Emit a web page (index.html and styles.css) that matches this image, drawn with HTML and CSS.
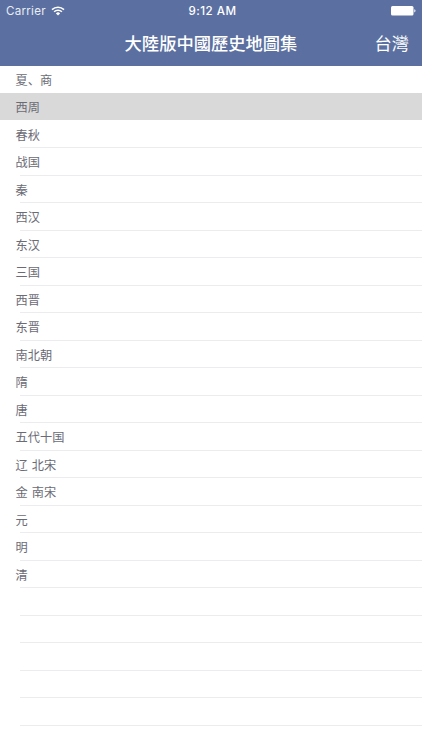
FILE: index.html
```
<!DOCTYPE html>
<html lang="zh-Hans">
<head>
  <meta charset="utf-8">
  <title>大陸版中國歷史地圖集</title>
  <link rel="stylesheet" href="styles.css">
</head>
<body>

<header>
  <div class="status">
    <div class="carrier">
      <span>Carrier</span>
      <svg width="14" height="10" viewBox="0 0 14 10">
        <path d="M1 3.6a8.6 8.6 0 0 1 12 0M3.1 5.8a5.6 5.6 0 0 1 7.8 0" fill="none" stroke="#fff" stroke-width="1.5"/>
        <path d="M4.9 7.4a3 3 0 0 1 4.2 0L7 9.5z" fill="#fff"/>
      </svg>
    </div>
    <div class="time">9:12 AM</div>
    <div class="battery">
      <svg width="25" height="10" viewBox="0 0 25 10">
        <rect width="22.5" height="9.5" rx="1.5" fill="#fff"/>
        <path d="M23.3 3.2q1.2.4 1.2 1.6t-1.2 1.6z" fill="#fff"/>
      </svg>
    </div>
  </div>
  <nav lang="zh-Hant">
    <h1>大陸版中國歷史地圖集</h1>
    <a class="region">台灣</a>
  </nav>
</header>

<ul class="periods">
  <li class="plain">夏、商</li>
  <li class="selected">西周</li>
  <li>春秋</li>
  <li>战国</li>
  <li>秦</li>
  <li>西汉</li>
  <li>东汉</li>
  <li>三国</li>
  <li>西晋</li>
  <li>东晋</li>
  <li>南北朝</li>
  <li>隋</li>
  <li>唐</li>
  <li>五代十国</li>
  <li>辽 北宋</li>
  <li>金 南宋</li>
  <li>元</li>
  <li>明</li>
  <li>清</li>
  <li></li>
  <li></li>
  <li></li>
  <li></li>
  <li></li>
</ul>

</body>
</html>
```
FILE: styles.css
```
body {
  margin: 0;
  height: 750px;
  overflow: hidden;
  background-color: #fff;
  font-family: Inter, "Noto Sans CJK SC", sans-serif;
}
header {
  height: 65.5px;
  color: #fff;
  background-color: #5b70a1;
}
.status {
  display: grid;
  grid-template-columns: 1fr auto 1fr;
  align-items: center;
  height: 21px;
  padding: 0 6px;
  font-size: 11.6px;
}
.carrier {
  display: flex;
  align-items: center;
  gap: 5px;
  color: #e9edf5;
  letter-spacing: 0.25px;
}
.time {
  padding-left: 3px;
  font-weight: 500;
  letter-spacing: 0.5px;
}
.battery {
  display: flex;
  justify-content: flex-end;
}
nav {
  display: grid;
  grid-template-columns: 1fr auto 1fr;
  align-items: center;
  height: 42px;
  padding: 0 13px;
  font-family: "Noto Sans CJK TC", sans-serif;
}
h1 {
  grid-column: 2;
  margin: 0;
  font-size: 17.3px;
  font-weight: 500;
}
.region {
  justify-self: end;
  font-size: 17.2px;
}
.periods {
  margin: 0;
  padding: 0;
  list-style: none;
}
.periods li {
  box-sizing: border-box;
  height: 27.5px;
  padding-left: 15.6px;
  font-family: "Noto Sans CJK SC", sans-serif;
  font-size: 12.2px;
  line-height: 28px;
  word-spacing: 1.2px;
  color: #6b6b76;
  background: linear-gradient(#ececee, #ececee) 20px 100% / 100% 1px no-repeat;
}
.periods .plain {
  background: none;
}
.periods .selected {
  background: linear-gradient(#d9d9d9, #d9d9d9) 0 0 / 100% 27px no-repeat;
}
```
